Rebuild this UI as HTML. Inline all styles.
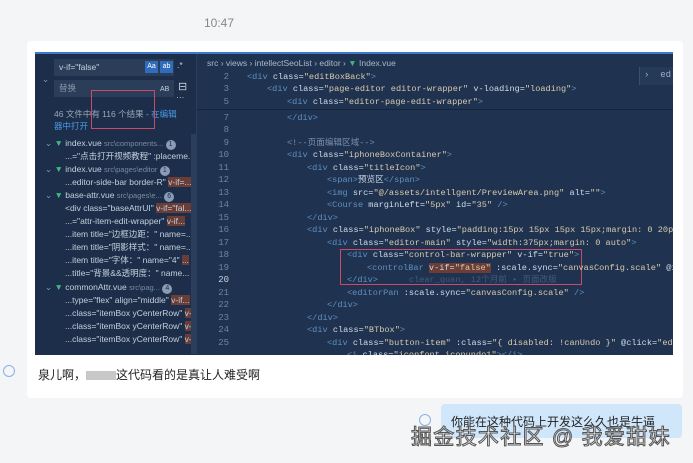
<!DOCTYPE html>
<html><head><meta charset="utf-8"><style>
*{margin:0;padding:0;box-sizing:border-box}
body{width:693px;height:463px;background:#f4f5f7;font-family:"Liberation Sans","Noto Sans CJK SC",sans-serif;position:relative;overflow:hidden}
.time{position:absolute;left:204px;top:16px;font-size:12px;color:#888}
.card{position:absolute;left:27px;top:41px;width:656px;height:357px;background:#fff;border-radius:4px}
.shot{position:absolute;left:35px;top:52px;width:638px;height:303px;background:#1f3351;border-top:2px solid #3c7ad0;overflow:hidden}
.side{position:absolute;left:0;top:0;width:162px;height:303px;background:#1c2e49;font-size:8.5px;color:#c5d0dc;border-right:1px solid #2a3d59}
.side .row{position:absolute;white-space:nowrap;overflow:hidden;line-height:11px}
.code{position:absolute;left:162px;top:0;right:0;height:303px;font-family:"Liberation Mono","Noto Sans CJK SC",monospace;font-size:8.6px}
.ln{position:absolute;white-space:pre;color:#c7d3e0;line-height:12px;height:12px}
.num{position:absolute;width:32px;text-align:right;color:#6f84a0;font-family:"Liberation Mono",monospace;font-size:9px;line-height:12px}
.t{color:#5f8fc0}.s{color:#d8c9ad}.a{color:#cfdbe8}.c{color:#7a90a8}
.badge{display:inline-block;width:10px;height:10px;border-radius:5px;background:#8a9bb3;color:#1c2e49;font-size:7px;text-align:center;line-height:10px}
.hl{background:#6a3d36}
.msg{position:absolute;left:27px;top:356px;width:656px;height:42px;background:#fff;font-size:12px;color:#222;padding:10px 0 0 11px;border-radius:0 0 4px 4px}
.circ{position:absolute;width:12px;height:12px;border:1.5px solid #8ab0e8;border-radius:50%}
.bub{position:absolute;left:441px;top:404px;width:241px;height:34px;background:#cfe6fb;border-radius:4px;font-size:12px;color:#222;padding:9px 0 0 10px}
.wm{position:absolute;left:411px;top:421px;font-size:21px;color:#f4f4f4;-webkit-text-stroke:1px #555;letter-spacing:1.3px;white-space:nowrap}
</style></head><body>
<div class="time">10:47</div>
<div class="card"></div>
<div class="shot">
 <div class="side">
  <div style="position:absolute;left:19px;top:5px;width:120px;height:17px;background:#2a3d59"></div>
  <div class="row" style="left:24px;top:8px">v-if="false"</div>
  <div style="position:absolute;left:110px;top:7px;width:13px;height:12px;background:#2f6cbd;font-size:7px;color:#fff;text-align:center;line-height:12px">Aa</div>
  <div style="position:absolute;left:125px;top:7px;width:13px;height:12px;background:#2f6cbd;font-size:7px;color:#fff;text-align:center;line-height:12px">ab</div>
  <div class="row" style="left:142px;top:6px">.*</div>
  <div class="row" style="left:7px;top:20px;color:#8899aa">⌄</div>
  <div style="position:absolute;left:19px;top:26px;width:120px;height:17px;background:#2a3d59"></div>
  <div class="row" style="left:24px;top:29px;color:#8899aa">替换</div>
  <div class="row" style="left:125px;top:30px;font-size:7px">AB</div>
  <div class="row" style="left:143px;top:28px;font-size:11px">⊟</div>
  <div class="row" style="left:141px;top:38px">···</div>
  <div class="row" style="left:19px;top:55px;color:#9aa8b8">46 文件中有 116 个结果 - <span style="color:#4a9be8">在编辑</span></div>
  <div class="row" style="left:19px;top:67px;color:#4a9be8">器中打开</div>
  <div style="position:absolute;left:56px;top:36px;width:64px;height:39px;border:1px solid #c94a6a"></div>
  <div class="row" style="left:10px;top:84px;width:150px"><span style="color:#8899aa">⌄</span> <span style="color:#41b883">▼</span> index.vue <span style="color:#7a8ca0;font-size:7.5px">src\components...</span> <span class="badge">1</span></div>
  <div class="row" style="left:30px;top:97px;width:128px">...="点击打开视频教程" :placeme...</div>
  <div class="row" style="left:10px;top:110px;width:150px"><span style="color:#8899aa">⌄</span> <span style="color:#41b883">▼</span> index.vue <span style="color:#7a8ca0;font-size:7.5px">src\pages\editor</span> <span class="badge">1</span></div>
  <div class="row" style="left:30px;top:123px;width:128px">...editor-side-bar border-R" <span class="hl">v-if=...</span></div>
  <div class="row" style="left:10px;top:136px;width:150px"><span style="color:#8899aa">⌄</span> <span style="color:#41b883">▼</span> base-attr.vue <span style="color:#7a8ca0;font-size:7.5px">src\pages\e...</span> <span class="badge">6</span></div>
  <div class="row" style="left:30px;top:149px;width:128px">&lt;div class="baseAttrUI" <span class="hl">v-if="fal...</span></div>
  <div class="row" style="left:30px;top:162px;width:128px">...="attr-item-edit-wrapper" <span class="hl">v-if...</span></div>
  <div class="row" style="left:30px;top:175px;width:128px">...item title="边框边距：" name=...</div>
  <div class="row" style="left:30px;top:188px;width:128px">...item title="阴影样式：" name=...</div>
  <div class="row" style="left:30px;top:201px;width:128px">...item title="字体：" name="4" <span class="hl">...</span></div>
  <div class="row" style="left:30px;top:214px;width:128px">...title="背景&amp;&amp;透明度：" name...</div>
  <div class="row" style="left:10px;top:228px;width:150px"><span style="color:#8899aa">⌄</span> <span style="color:#41b883">▼</span> commonAttr.vue <span style="color:#7a8ca0;font-size:7.5px">src\pag...</span> <span class="badge">4</span></div>
  <div class="row" style="left:30px;top:241px;width:128px">...type="flex" align="middle" <span class="hl">v-if...</span></div>
  <div class="row" style="left:30px;top:254px;width:128px">...class="itemBox yCenterRow" <span class="hl">v-...</span></div>
  <div class="row" style="left:30px;top:267px;width:128px">...class="itemBox yCenterRow" <span class="hl">v-...</span></div>
  <div class="row" style="left:30px;top:280px;width:128px">...class="itemBox yCenterRow" <span class="hl">v-...</span></div>
  <div style="position:absolute;left:156px;top:80px;width:5px;height:220px;background:#2b3f5c"></div>
 </div>
 <div class="code">
  <div class="ln" style="left:10px;top:3px;font-family:'Liberation Sans','Noto Sans CJK SC',sans-serif;font-size:8.5px;color:#aab8c8">src › views › intellectSeoList › editor › <span style="color:#41b883">▼</span> Index.vue</div>
  <div style="position:absolute;left:0;right:0;top:55px;height:1px;background:#15243a"></div>
  <div style="position:absolute;left:442px;top:13px;width:40px;height:18px;background:#243a58;border-left:1px solid #3b5070;color:#aab;font-size:9px;padding:3px 4px">›&nbsp; ed</div>
  <div style="position:absolute;left:143px;top:195px;width:242px;height:36px;border:1.3px solid #c94a6a"></div>
  <div class="num" style="left:0;top:17px">2</div><div class="ln" style="left:50px;top:17px"><span class="t">&lt;div</span> <span class="a">class=</span><span class="s">"editBoxBack"</span><span class="t">&gt;</span></div>
  <div class="num" style="left:0;top:29px">3</div><div class="ln" style="left:70px;top:29px"><span class="t">&lt;div</span> <span class="a">class=</span><span class="s">"page-editor editor-wrapper"</span> <span class="a">v-loading=</span><span class="s">"loading"</span><span class="t">&gt;</span></div>
  <div class="num" style="left:0;top:42px">5</div><div class="ln" style="left:90px;top:42px"><span class="t">&lt;div</span> <span class="a">class=</span><span class="s">"editor-page-edit-wrapper"</span><span class="t">&gt;</span></div>
  <div class="num" style="left:0;top:58px">7</div><div class="ln" style="left:90px;top:58px"><span class="t">&lt;/div&gt;</span></div>
  <div class="num" style="left:0;top:70px">8</div>
  <div class="num" style="left:0;top:83px">9</div><div class="ln c" style="left:90px;top:83px">&lt;!--页面编辑区域--&gt;</div>
  <div class="num" style="left:0;top:95px">10</div><div class="ln" style="left:90px;top:95px"><span class="t">&lt;div</span> <span class="a">class=</span><span class="s">"iphoneBoxContainer"</span><span class="t">&gt;</span></div>
  <div class="num" style="left:0;top:108px">11</div><div class="ln" style="left:110px;top:108px"><span class="t">&lt;div</span> <span class="a">class=</span><span class="s">"titleIcon"</span><span class="t">&gt;</span></div>
  <div class="num" style="left:0;top:120px">12</div><div class="ln" style="left:130px;top:120px"><span class="t">&lt;span&gt;</span>预览区<span class="t">&lt;/span&gt;</span></div>
  <div class="num" style="left:0;top:133px">13</div><div class="ln" style="left:130px;top:133px"><span class="t">&lt;img</span> <span class="a">src=</span><span class="s">"@/assets/intellgent/PreviewArea.png"</span> <span class="a">alt=</span><span class="s">""</span><span class="t">&gt;</span></div>
  <div class="num" style="left:0;top:145px">14</div><div class="ln" style="left:130px;top:145px"><span class="t">&lt;Course</span> <span class="a">marginLeft=</span><span class="s">"5px"</span> <span class="a">id=</span><span class="s">"35"</span> <span class="t">/&gt;</span></div>
  <div class="num" style="left:0;top:158px">15</div><div class="ln" style="left:110px;top:158px"><span class="t">&lt;/div&gt;</span></div>
  <div class="num" style="left:0;top:170px">16</div><div class="ln" style="left:110px;top:170px"><span class="t">&lt;div</span> <span class="a">class=</span><span class="s">"iphoneBox"</span> <span class="a">style=</span><span class="s">"padding:15px 15px 15px 15px;margin: 0 20px</span></div>
  <div class="num" style="left:0;top:183px">17</div><div class="ln" style="left:130px;top:183px"><span class="t">&lt;div</span> <span class="a">class=</span><span class="s">"editor-main"</span> <span class="a">style=</span><span class="s">"width:375px;margin: 0 auto"</span><span class="t">&gt;</span></div>
  <div class="num" style="left:0;top:195px">18</div><div class="ln" style="left:150px;top:195px"><span class="t">&lt;div</span> <span class="a">class=</span><span class="s">"control-bar-wrapper"</span> <span class="a">v-if=</span><span class="s">"true"</span><span class="t">&gt;</span></div>
  <div class="num" style="left:0;top:208px">19</div><div class="ln" style="left:170px;top:208px"><span class="t">&lt;controlBar</span> <span class="hl"><span class="a">v-if=</span><span class="s">"false"</span></span> <span class="a">:scale.sync=</span><span class="s">"canvasConfig.scale"</span> @i</div>
  <div class="num" style="left:0;top:220px;color:#c7d3e0">20</div><div class="ln" style="left:150px;top:220px"><span class="t">&lt;/div&gt;</span>      <span style="color:#44597a">clear_quan, 12个月前 • 页面改版</span></div>
  <div class="num" style="left:0;top:233px">21</div><div class="ln" style="left:150px;top:233px"><span class="t">&lt;editorPan</span> <span class="a">:scale.sync=</span><span class="s">"canvasConfig.scale"</span> <span class="t">/&gt;</span></div>
  <div class="num" style="left:0;top:245px">22</div><div class="ln" style="left:130px;top:245px"><span class="t">&lt;/div&gt;</span></div>
  <div class="num" style="left:0;top:258px">23</div><div class="ln" style="left:110px;top:258px"><span class="t">&lt;/div&gt;</span></div>
  <div class="num" style="left:0;top:270px">24</div><div class="ln" style="left:110px;top:270px"><span class="t">&lt;div</span> <span class="a">class=</span><span class="s">"BTbox"</span><span class="t">&gt;</span></div>
  <div class="num" style="left:0;top:283px">25</div><div class="ln" style="left:130px;top:283px"><span class="t">&lt;div</span> <span class="a">class=</span><span class="s">"button-item"</span> <span class="a">:class=</span><span class="s">"{ disabled: !canUndo }"</span> <span class="a">@click=</span><span class="s">"edit</span></div>
  <div class="ln" style="left:150px;top:295px"><span class="t">&lt;i</span> <span class="a">class=</span><span class="s">"iconfont iconundo1"</span><span class="t">&gt;&lt;/i&gt;</span></div>
 </div>
</div>
<div class="msg">泉儿啊，<span style="display:inline-block;width:30px;height:9px;background:#c8c8c8;vertical-align:middle"></span>这代码看的是真让人难受啊</div>
<div class="circ" style="left:3px;top:365px"></div>
<div class="circ" style="left:419px;top:414px"></div>
<div class="bub">你能在这种代码上开发这么久也是牛逼</div>
<div class="wm">掘金技术社区 @ 我爱甜妹</div>
</body></html>
